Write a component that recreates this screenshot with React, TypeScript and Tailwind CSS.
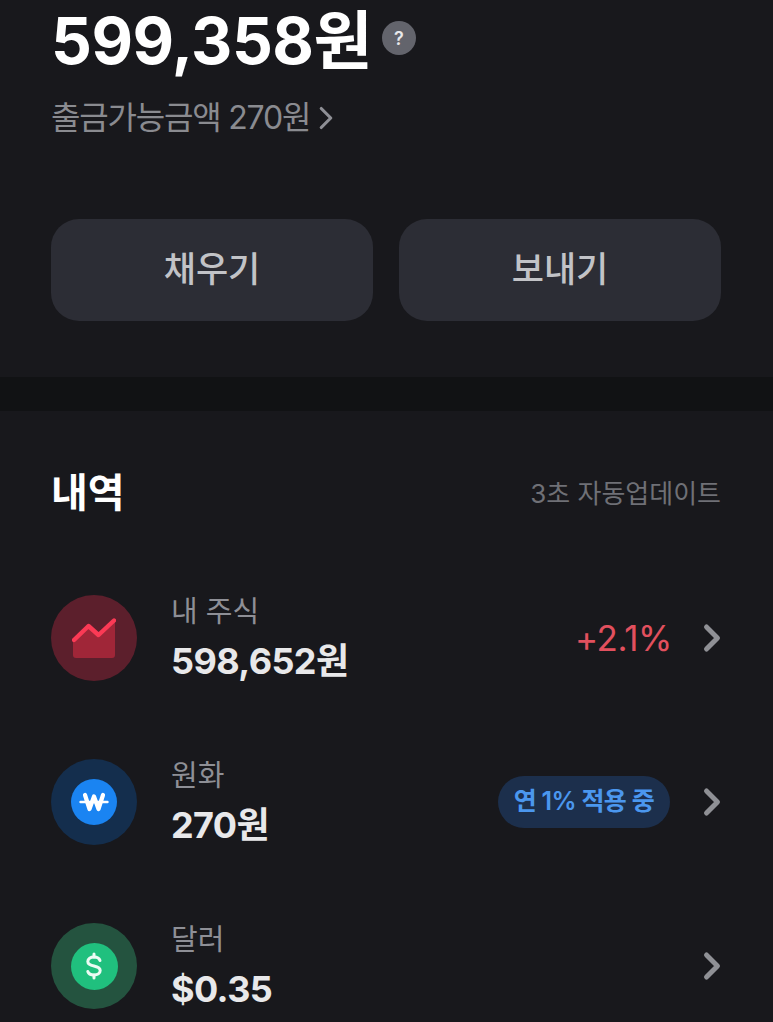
import React from 'react';
import { ChevronRight } from 'lucide-react';

const FONT = "font-['Inter','Noto_Sans_CJK_KR',sans-serif]";

const StockIcon = () => (
  <div className="w-[86px] h-[86px] rounded-full bg-[#5c1f2c] flex items-center justify-center shrink-0">
    <svg width="44" height="42" viewBox="0 0 44 42">
      <path d="M1 24 L16.5 9 L26.5 18 L43 3 V38 a3 3 0 0 1 -3 3 H4 a3 3 0 0 1 -3 -3 Z" fill="#a02638" />
      <path d="M2 23 L16.5 9 L26.5 18 L42 3.5" fill="none" stroke="#fb3a55" strokeWidth="4.4" strokeLinecap="round" strokeLinejoin="round" />
    </svg>
  </div>
);

const WonIcon = () => (
  <div className="w-[86px] h-[86px] rounded-full bg-[#142e4d] flex items-center justify-center shrink-0">
    <div className="w-[46px] h-[46px] rounded-full bg-[#1a84f2] flex items-center justify-center">
      <svg width="30" height="20" viewBox="0 0 30 20" fill="none" stroke="#ffffff" strokeLinecap="round" strokeLinejoin="round">
        <path d="M6 3 L10.5 17 L15 4.5 L19.5 17 L24 3" strokeWidth="4.2" />
        <path d="M1.5 10 H28.5" strokeWidth="2.4" />
      </svg>
    </div>
  </div>
);

const DollarIcon = () => (
  <div className="w-[86px] h-[86px] rounded-full bg-[#24533f] flex items-center justify-center shrink-0">
    <div className="w-[47px] h-[47px] rounded-full bg-[#20c07e] flex items-center justify-center">
      <svg width="18" height="28" viewBox="0 0 18 28" fill="none" stroke="#ecfbf4" strokeWidth="3" strokeLinecap="round" strokeLinejoin="round">
        <path d="M15 8.5 C14.2 6 12 5 9 5 C5.5 5 2.8 6.6 2.8 9.4 C2.8 12.3 5.5 13.2 9 14 C12.5 14.8 15.2 15.8 15.2 18.6 C15.2 21.4 12.5 23 9 23 C6 23 3.6 22 2.8 19.5" />
        <path d="M9 2 V5 M9 23 V26" />
      </svg>
    </div>
  </div>
);

interface AssetRowProps {
  icon: React.ReactNode;
  label: string;
  amount: string;
  right?: React.ReactNode;
}

const AssetRow: React.FC<AssetRowProps> = ({ icon, label, amount, right }) => (
  <div className="flex items-center h-[86px]">
    {icon}
    <div className="ml-[34px] flex-1 flex flex-col gap-[7px]">
      <div className="text-[29px] leading-[38px] text-[#8e8f96]">{label}</div>
      <div className="text-[36px] leading-[46px] font-bold text-[#e8e8ea] tracking-[-0.6px]">{amount}</div>
    </div>
    {right}
    <ChevronRight size={44} strokeWidth={2.7} className="text-[#8f9095] ml-[20px] mr-[-13px]" />
  </div>
);

export default function App() {
  return (
    <div className={`${FONT} bg-[#18181c] h-[1022px] overflow-hidden`}>
      <section className="h-[377px] pl-[51px] pr-[52px] pt-[9px]">
        <div className="flex items-center">
          <span className="text-[64px] leading-[64px] font-bold text-white tracking-[-0.5px]">599,358원</span>
          <span className="ml-[10px] mb-[6px] w-[34px] h-[34px] rounded-full bg-[#63646c] flex items-center justify-center text-[18px] font-semibold text-[#e8e8ea]">?</span>
        </div>
        <div className="mt-[25px] flex items-center text-[32px] leading-[40px] text-[#8a8b90] tracking-[-1.2px]">
          출금가능금액 270원
          <ChevronRight size={38} strokeWidth={2} className="text-[#8e8f95] ml-[-3px]" />
        </div>
        <div className="mt-[81px] grid grid-cols-2 gap-[26px]">
          <button className="h-[102px] pb-[1px] rounded-[28px] bg-[#2c2d35] text-[35px] font-medium text-[#c2c3c7]">채우기</button>
          <button className="h-[102px] pb-[1px] rounded-[28px] bg-[#2c2d35] text-[35px] font-medium text-[#c2c3c7]">보내기</button>
        </div>
      </section>

      <div className="h-[34px] bg-[#111214]" />

      <section className="pl-[51px] pr-[52px] pt-[54px]">
        <div className="flex items-center justify-between h-[56px]">
          <h2 className="text-[40px] font-bold text-white">내역</h2>
          <span className="text-[26px] text-[#6f7076]">3초 자동업데이트</span>
        </div>
        <div className="mt-[74px] flex flex-col gap-[78px]">
          <AssetRow
            icon={<StockIcon />}
            label="내 주식"
            amount="598,652원"
            right={<span className="text-[35px] text-[#e2505e] tracking-[-0.4px] mr-[-2px]">+2.1%</span>}
          />
          <AssetRow
            icon={<WonIcon />}
            label="원화"
            amount="270원"
            right={
              <span className="h-[52px] px-[16px] rounded-[26px] bg-[#1c2f4c] flex items-center text-[25px] font-semibold text-[#4b97ee] tracking-[-0.7px]">
                연 1% 적용 중
              </span>
            }
          />
          <AssetRow icon={<DollarIcon />} label="달러" amount="$0.35" />
        </div>
      </section>
    </div>
  );
}
